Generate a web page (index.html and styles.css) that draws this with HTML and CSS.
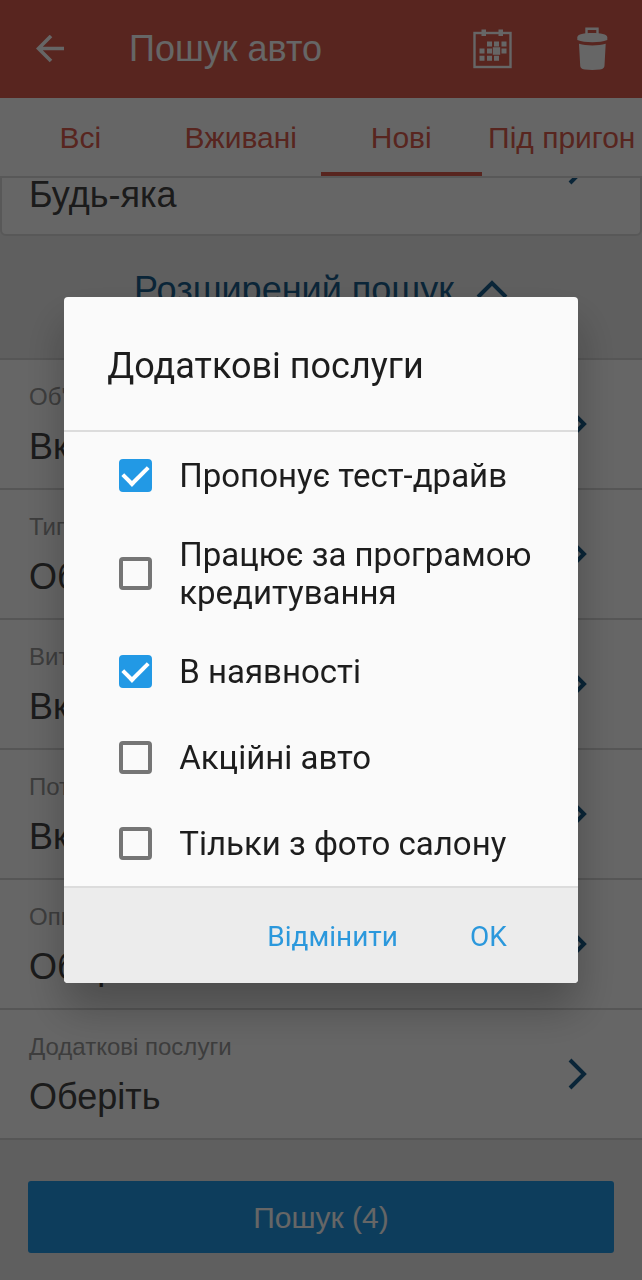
FILE: index.html
```html
<!DOCTYPE html>
<html lang="uk">
<head>
  <meta charset="UTF-8">
  <meta name="viewport" content="width=device-width, initial-scale=1">
  <title>Пошук авто</title>
  <link rel="stylesheet" href="styles.css">
</head>
<body>
  <div class="page">
    <!-- Header -->
    <header class="topbar">
      <button type="button" class="icon-btn" aria-label="Назад">
        <svg width="28" height="28" viewBox="0 0 28 28" fill="none" stroke="#fff" stroke-width="3.6">
          <path d="M15 1L2.500 13.500 15 26M2 13.500h26"/>
        </svg>
      </button>
      <h1>Пошук авто</h1>
      <button type="button" class="icon-btn" aria-label="Календар">
        <svg width="42" height="42" viewBox="0 0 42 42" fill="#fff">
          <rect x="2.500" y="5" width="36" height="34" fill="none" stroke="#fff" stroke-width="2.400"/>
          <path d="M9.500 1.500h4.500v6.500H9.500zM26.500 1.500H31v6.500h-4.500z"/>
          <path d="M15 13.500h5v5h-5zM22 13.500h5v5h-5zM29.500 13.500h5v5h-5z"/>
          <path d="M7.500 20.500h5v5h-5zM15 20.500h5v5h-5zM20.800 19.300h7.400v7.400h-7.400zM29.500 20.500h5v5h-5z"/>
          <path d="M7.500 27.700h5v5h-5zM15 27.700h5v5h-5zM22 27.700h5v5h-5z"/>
        </svg>
      </button>
      <button type="button" class="icon-btn" aria-label="Очистити">
        <svg width="34" height="44" viewBox="0 0 34 44" fill="#fff">
          <path d="M10.500 8V1.700h11V8" fill="none" stroke="#fff" stroke-width="2.400"/>
          <path d="M1.300 10.500c0-3.500 7-4.500 15-4.500s15 1 15 4.500v2.500c-4 1.600-9 2.200-15 2.200S5.300 14.600 1.300 13z"/>
          <path d="M3 16.800c4 1.200 8 1.600 13.300 1.600s9.400-.4 13.400-1.600L28.500 38.500c-.2 2-1 3.500-4.500 4-5 .5-10.300 .5-15.300 0-3.500-.5-4.300-2-4.500-4z"/>
        </svg>
      </button>
    </header>

    <!-- Tabs -->
    <nav class="tabs">
      <a href="#all">Всі</a>
      <a href="#used">Вживані</a>
      <a href="#new" class="active">Нові</a>
      <a href="#import">Під пригон</a>
    </nav>

    <main class="form">
      <div class="card">
        <a href="#region" class="row">
          <span class="row-text"><span class="value">Будь-яка</span></span>
          <svg class="chevron" viewBox="0 0 20 32"><path d="M2 2l14 14L2 30"/></svg>
        </a>
      </div>

      <button type="button" class="advanced">
        Розширений пошук
        <svg class="chevron-up" viewBox="0 0 32 20"><path d="M2 17L16 3l14 14"/></svg>
      </button>

      <div class="rows">
        <a href="#engine" class="row">
          <span class="row-text"><span class="label">Об'єм двигуна</span><span class="value">Вкажіть</span></span>
          <svg class="chevron" viewBox="0 0 20 32"><path d="M2 2l14 14L2 30"/></svg>
        </a>
        <a href="#fuel" class="row">
          <span class="row-text"><span class="label">Тип палива</span><span class="value">Оберіть</span></span>
          <svg class="chevron" viewBox="0 0 20 32"><path d="M2 2l14 14L2 30"/></svg>
        </a>
        <a href="#consumption" class="row">
          <span class="row-text"><span class="label">Витрата палива</span><span class="value">Вкажіть</span></span>
          <svg class="chevron" viewBox="0 0 20 32"><path d="M2 2l14 14L2 30"/></svg>
        </a>
        <a href="#power" class="row">
          <span class="row-text"><span class="label">Потужність</span><span class="value">Вкажіть</span></span>
          <svg class="chevron" viewBox="0 0 20 32"><path d="M2 2l14 14L2 30"/></svg>
        </a>
        <a href="#options" class="row">
          <span class="row-text"><span class="label">Опції</span><span class="value">Оберіть</span></span>
          <svg class="chevron" viewBox="0 0 20 32"><path d="M2 2l14 14L2 30"/></svg>
        </a>
        <a href="#services" class="row">
          <span class="row-text"><span class="label">Додаткові послуги</span><span class="value">Оберіть</span></span>
          <svg class="chevron" viewBox="0 0 20 32"><path d="M2 2l14 14L2 30"/></svg>
        </a>
      </div>
    </main>

    <footer class="search-bar">
      <button type="button" class="search-btn">Пошук (4)</button>
    </footer>
  </div>

  <!-- Dialog -->
  <div class="overlay">
    <form class="dialog" role="dialog" aria-modal="true" aria-labelledby="dialog-title">
      <h2 id="dialog-title">Додаткові послуги</h2>
      <div class="options">
        <label class="option"><input type="checkbox" name="testdrive" checked><span>Пропонує тест-драйв</span></label>
        <label class="option"><input type="checkbox" name="credit"><span>Працює за програмою кредитування</span></label>
        <label class="option"><input type="checkbox" name="instock" checked><span>В наявності</span></label>
        <label class="option"><input type="checkbox" name="promo"><span>Акційні авто</span></label>
        <label class="option"><input type="checkbox" name="photo"><span>Тільки з фото салону</span></label>
      </div>
      <div class="actions">
        <button type="button">Відмінити</button>
        <button type="button">OK</button>
      </div>
    </form>
  </div>
</body>
</html>
```
FILE: styles.css
```css
* {
  box-sizing: border-box;
}

body {
  margin: 0;
  font-family: "Liberation Sans", Arial, sans-serif;
  color: #444;
  background: #ededed;
}

button {
  padding: 0;
  border: none;
  background: none;
  font-family: inherit;
  cursor: pointer;
}

a {
  color: inherit;
  text-decoration: none;
}

svg {
  display: block;
}

.page {
  display: flex;
  flex-direction: column;
  height: 100vh;
}

/* Header */
.topbar {
  display: flex;
  align-items: center;
  flex: none;
  height: 98px;
  padding: 0 32px 0 36px;
  background: #dc5c4e;
}

.topbar h1 {
  flex: 1;
  margin: 0 0 0 65px;
  font-size: 36px;
  font-weight: normal;
  color: #fff;
}

.icon-btn + .icon-btn {
  margin-left: 62px;
}

/* Tabs */
.tabs {
  display: grid;
  grid-template-columns: repeat(4, 1fr);
  flex: none;
  height: 80px;
  border-bottom: 2px solid #ddd;
  background: #fff;
}

.tabs a {
  display: flex;
  align-items: center;
  justify-content: center;
  padding-top: 6px;
  border-bottom: 4px solid transparent;
  font-size: 30px;
  color: #dc5c4e;
  white-space: nowrap;
}

.tabs .active {
  border-color: #dc5c4e;
}

/* Form, scrolled part way under the tabs */
.form {
  flex: 1;
  display: flex;
  flex-direction: column;
  justify-content: flex-end;
  min-height: 0;
  overflow: hidden;
}

.card {
  border: 2px solid #ddd;
  border-radius: 6px;
  background: #fff;
}

.row {
  display: flex;
  align-items: center;
  justify-content: space-between;
  height: 130px;
  padding: 0 54px 0 29px;
  border-bottom: 2px solid #d8d8d8;
}

.card .row {
  padding: 0 52px 0 27px;
  border-bottom: none;
}

.row-text {
  display: flex;
  flex-direction: column;
  justify-content: flex-end;
  height: 100%;
  padding-bottom: 20px;
}

.card .row-text {
  padding-bottom: 18px;
}

.label {
  margin-bottom: 15px;
  font-size: 24px;
  line-height: 28px;
  color: #999;
}

.value {
  font-size: 36px;
  line-height: 42px;
}

.chevron {
  width: 20px;
  height: 32px;
  fill: none;
  stroke: #1b5e8c;
  stroke-width: 4;
}

.chevron-up {
  width: 32px;
  height: 20px;
  fill: none;
  stroke: #1b5e8c;
  stroke-width: 4;
}

.advanced {
  display: flex;
  align-items: center;
  justify-content: center;
  gap: 22px;
  flex: none;
  height: 122px;
  padding-bottom: 14px;
  font-size: 36px;
  color: #1b5e8c;
}

.rows {
  flex: none;
  border-top: 2px solid #d8d8d8;
  background: #fff;
}

/* Search button */
.search-bar {
  flex: none;
  padding: 41px 28px 27px;
}

.search-btn {
  display: block;
  width: 100%;
  height: 72px;
  padding-top: 2px;
  border-radius: 3px;
  background: #2299e5;
  font-size: 30px;
  color: #fff;
}

/* Dialog */
.overlay {
  position: fixed;
  inset: 0;
  display: flex;
  align-items: center;
  justify-content: center;
  background: rgba(0, 0, 0, 0.6);
  font-family: Roboto, sans-serif;
  color: #1d1d1d;
}

.dialog {
  width: 80%;
  overflow: hidden;
  border-radius: 4px;
  background: #fafafa;
  box-shadow: 0 26px 44px rgba(0, 0, 0, 0.26);
}

.dialog h2 {
  margin: 0;
  padding: 48px 43px 43px;
  border-bottom: 2px solid #dcdcdc;
  font-size: 36px;
  line-height: 42px;
  font-weight: normal;
}

.option {
  display: flex;
  align-items: center;
  gap: 27px;
  min-height: 86px;
  padding: 16px 40px 16px 55px;
  font-size: 33px;
  line-height: 38px;
  cursor: pointer;
}

.option span {
  padding-top: 2px;
}

.option input {
  display: grid;
  place-content: center;
  flex: none;
  width: 33px;
  height: 33px;
  margin: 0;
  border: 4px solid #757575;
  border-radius: 4px;
  appearance: none;
}

.option input:checked {
  border-color: #2299e5;
  background: #2299e5;
}

/* tick */
.option input:checked::before {
  content: "";
  width: 11px;
  height: 21px;
  margin-bottom: 6px;
  border: solid #fff;
  border-width: 0 4px 4px 0;
  transform: rotate(45deg);
}

.actions {
  display: flex;
  align-items: center;
  justify-content: flex-end;
  gap: 72px;
  height: 97px;
  padding: 2px 71px 0;
  border-top: 2px solid #dcdcdc;
  background: #ececec;
}

.actions button {
  font-size: 28px;
  line-height: 32px;
  color: #2b98dc;
}
```
